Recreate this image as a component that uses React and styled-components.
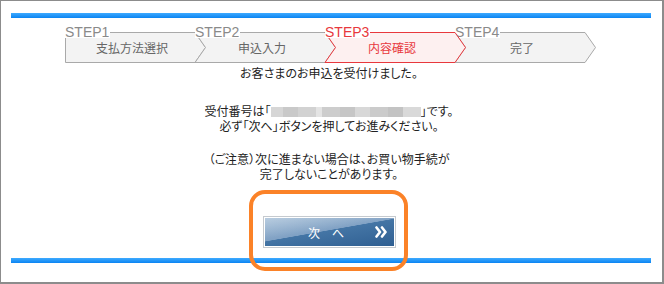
import React from 'react';
import styled, { createGlobalStyle } from 'styled-components';

const GlobalStyle = createGlobalStyle`
    body {
        margin: 0;
        background: #fff;
        font-family: "Noto Sans CJK JP", "Noto Sans", sans-serif;
    }
`

const steps = [
    { no: 1, label: '支払方法選択' },
    { no: 2, label: '申込入力' },
    { no: 3, label: '内容確認', active: true },
    { no: 4, label: '完了' },
]

function StepShape({ first, active }) {
    const points = first
        ? '0.5,0.5 130,0.5 140.5,15.5 130,30.5 0.5,30.5'
        : '0,0.5 130,0.5 140.5,15.5 130,30.5 0,30.5 10.5,15.5'
    return (
        <Shape width="142" height="31" viewBox="0 0 142 31">
            <polygon
                points={points}
                fill={active ? '#fdf0f0' : '#f3f3f3'}
                stroke={active ? '#e8383d' : '#a9a9a9'}
                strokeWidth="1"
            />
        </Shape>
    )
}

function App() {
    return (
        <>
            <GlobalStyle />
            <Frame>
                <BlueBar />
                <Steps>
                    {steps.map((s, i) => (
                        <Step key={s.no} active={s.active}>
                            <StepBox>
                                <StepShape first={i === 0} active={s.active} />
                                <StepText active={s.active}>{s.label}</StepText>
                            </StepBox>
                            <StepLabel active={s.active}>STEP{s.no}</StepLabel>
                        </Step>
                    ))}
                </Steps>
                <Message>
                    <Para>お客さまのお申込を受付けました。</Para>
                    <Para gap={23}>
                        受付番号は「<Blurred />」です。<br />
                        必ず「次へ」ボタンを押してお進みください。
                    </Para>
                    <Para gap={18}>
                        （ご注意）次に進まない場合は、お買い物手続が<br />
                        完了しないことがあります。
                    </Para>
                </Message>
                <ButtonRow>
                    <ButtonWrap>
                        <NextButton type="button">
                            <span>次　へ</span>
                            <Arrows width="12" height="14" viewBox="0 0 12 14">
                                <polyline points="1.5,2.5 5,7 1.5,11.5" />
                                <polyline points="7,2.5 10.5,7 7,11.5" />
                            </Arrows>
                        </NextButton>
                        <Highlight />
                    </ButtonWrap>
                </ButtonRow>
                <BlueBar />
            </Frame>
        </>
    )
}

export default App

const Frame = styled.div`
    width: 664px;
    height: 284px;
    box-sizing: border-box;
    border: 1px solid #8c8c8c;
    border-right-width: 2px;
    border-bottom-width: 2px;
    padding: 12px 11px 0 10px;
    background: #fff;
    overflow: hidden;
`

const BlueBar = styled.div`
    height: 5px;
    background: linear-gradient(to bottom, #3eaaff, #0b84f2);
`

const Steps = styled.div`
    display: flex;
    margin-top: 8px;
    padding-left: 54px;
`

const Step = styled.div`
    position: relative;
    flex: none;
    width: 130px;
    height: 36px;
    padding-top: 6px;
    box-sizing: border-box;
    z-index: ${props => props.active ? 2 : 1};
`

const StepBox = styled.div`
    position: relative;
    height: 30px;
    display: flex;
    justify-content: center;
    align-items: center;
`

const Shape = styled.svg`
    position: absolute;
    top: 0;
    left: 0;
    overflow: visible;
`

const StepText = styled.span`
    position: relative;
    font-size: 12px;
    color: ${props => props.active ? '#e8383d' : '#666'};
    padding-left: 4px;
`

const StepLabel = styled.span`
    position: absolute;
    top: 0;
    left: 0;
    padding-right: 1px;
    background: #fff;
    font-family: "Liberation Sans", Arial, sans-serif;
    font-size: 14px;
    line-height: 12px;
    color: ${props => props.active ? '#e8383d' : '#8a8a8a'};
`

const Message = styled.div`
    margin-top: 3px;
    text-align: center;
    font-size: 12px;
    line-height: 15px;
    color: #222;
    font-feature-settings: "palt";
    padding-right: 4px;
`

const Para = styled.p`
    margin: ${props => props.gap || 0}px 0 0;
`

const Blurred = styled.span`
    display: inline-block;
    width: 150px;
    height: 10px;
    vertical-align: -1px;
    filter: blur(0.6px);
    background: linear-gradient(to right,
        #d6d6d6 0 8%, #c9c9c9 8% 18%, #d2d2d2 18% 30%, #e4e4e4 30% 34%,
        #cdcdcd 34% 46%, #c6c6c6 46% 56%, #d8d8d8 56% 66%, #cbcbcb 66% 78%,
        #c3c3c3 78% 88%, #d9d9d9 88% 100%);
`

const ButtonRow = styled.div`
    display: flex;
    justify-content: center;
    margin-top: 35px;
    margin-bottom: 10px;
    padding-right: 3px;
`

const ButtonWrap = styled.div`
    position: relative;
`

const NextButton = styled.button`
    position: relative;
    width: 133px;
    height: 32px;
    box-sizing: border-box;
    border: 1px solid #c5cacf;
    padding: 0 8px 0 0;
    box-shadow: inset 0 0 0 1px #fff;
    background:
        linear-gradient(172deg, rgba(255,255,255,0.25) 0%, rgba(255,255,255,0) 45%, rgba(0,0,0,0) 100%),
        linear-gradient(170deg, #a4bed7 0%, #80a1c4 46%, #4475a5 47%, #2e5e91 100%);
    display: flex;
    align-items: center;
    justify-content: flex-end;
    gap: 31px;
    color: #fff;
    font-family: "Noto Sans CJK JP", sans-serif;
    font-size: 12px;
    cursor: pointer;
`

const Arrows = styled.svg`
    fill: none;
    stroke: #fff;
    stroke-width: 2.6;
    stroke-linejoin: round;
    stroke-linecap: round;
`

const Highlight = styled.div`
    position: absolute;
    left: -14px;
    top: -26px;
    width: 159px;
    height: 81px;
    box-sizing: border-box;
    border: 4px solid #fb8228;
    border-radius: 16px;
    pointer-events: none;
`
